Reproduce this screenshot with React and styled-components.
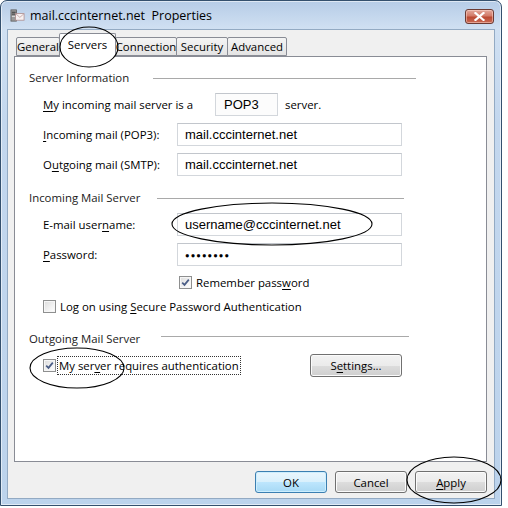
import React from "react";
import styled, { createGlobalStyle } from "styled-components";

const Global = createGlobalStyle`
  html, body { margin: 0; padding: 0; background: #ffffff; }
  body { font-family: "Open Sans", "Noto Sans", sans-serif; }
`;

const FS = "11.4px";

const Page = styled.div`
  position: relative;
  width: 508px;
  height: 508px;
  overflow: hidden;
`;

const Window = styled.div`
  box-sizing: border-box;
  width: 502px;
  height: 506px;
  border: 1px solid #34506e;
  border-radius: 7px 7px 0 0;
  background: linear-gradient(to bottom, #b6cce7 0px, #d0e0f2 28px, #c3d7ee 120px, #bcd3ec 100%);
  display: flex;
  flex-direction: column;
  box-shadow: inset 0 0 0 1px rgba(255, 255, 255, 0.55);
`;

const TitleBar = styled.div`
  height: 28px;
  display: flex;
  align-items: center;
  padding-left: 9px;
  padding-right: 7px;
  flex: none;
`;

const Title = styled.div`
  margin-left: 5px;
  font-family: "Open Sans", "Noto Sans", sans-serif;
  font-size: 12.5px;
  color: #000;
  white-space: pre;
`;

const CloseButton = styled.div`
  margin-left: auto;
  margin-top: 2px;
  width: 27px;
  height: 13px;
  border: 1px solid #6b3b34;
  border-radius: 3px;
  background: linear-gradient(to bottom, #e3a99c 0%, #d27a68 45%, #bb4a33 55%, #c96a55 100%);
  display: flex;
  align-items: center;
  justify-content: center;
  box-shadow: inset 0 0 0 1px rgba(255, 220, 210, 0.5);
`;

const Client = styled.div`
  flex: 1;
  margin: 0 6px 6px;
  border: 1px solid #93aac3;
  background: #f0f0f0;
  display: flex;
  flex-direction: column;
  padding: 3px 7px 5px 6px;
  min-height: 0;
`;

const TabRow = styled.div`
  display: flex;
  align-items: flex-end;
  height: 23px;
  padding-left: 2px;
  position: relative;
  z-index: 2;
`;

const Tab = styled.div`
  box-sizing: border-box;
  width: ${(p) => p.$w}px;
  height: ${(p) => (p.$active ? 24 : 19)}px;
  margin-right: -1px;
  margin-bottom: ${(p) => (p.$active ? -1 : 0)}px;
  border: 1px solid #898c95;
  border-bottom: ${(p) => (p.$active ? "none" : "1px solid #898c95")};
  border-radius: 2px 2px 0 0;
  background: ${(p) => (p.$active ? "#ffffff" : "linear-gradient(to bottom, #f4f4f4, #e4e4e4)")};
  font-size: ${FS};
  color: #000;
  display: flex;
  align-items: center;
  justify-content: center;
  padding-bottom: ${(p) => (p.$active ? 3 : 0)}px;
  position: relative;
  z-index: ${(p) => (p.$active ? 2 : 1)};
  white-space: nowrap;
`;

const Panel = styled.div`
  flex: 1;
  border: 1px solid #898c95;
  background: #ffffff;
  display: flex;
  flex-direction: column;
  padding-top: 12px;
`;

const GroupHeader = styled.div`
  display: flex;
  align-items: center;
  height: 16px;
  margin-top: ${(p) => p.$mt}px;
  padding-left: 14px;
  width: ${(p) => p.$end - 16}px;
  box-sizing: border-box;
`;

const GroupTitle = styled.span`
  width: ${(p) => p.$w}px;
  flex: none;
  font-size: ${FS};
  color: #1a1a1a;
  white-space: nowrap;
`;

const GroupLine = styled.div`
  flex: 1;
  height: 1px;
  background: #a9a9a9;
  margin-top: ${(p) => p.$dy || 2}px;
`;

const Row = styled.div`
  display: flex;
  align-items: center;
  height: ${(p) => p.$h || 23}px;
  margin-top: ${(p) => p.$mt}px;
  padding-left: ${(p) => p.$pl || 28}px;
  width: ${(p) => (p.$end ? p.$end - 16 : 0)}px;
  box-sizing: border-box;
`;

const Label = styled.span`
  width: ${(p) => p.$w || 134}px;
  flex: none;
  font-size: ${FS};
  color: #000;
  white-space: nowrap;
`;

const Field = styled.div`
  box-sizing: border-box;
  width: ${(p) => p.$w || 225}px;
  height: 23px;
  border: 1px solid #d3d7dc;
  border-top-color: #c2c6cc;
  background: ${(p) => (p.$readonly ? "#fcfcfc" : "#ffffff")};
  display: flex;
  align-items: center;
  padding-left: ${(p) => p.$pl || 7}px;
  font-family: "Liberation Sans", Arial, sans-serif;
  font-size: 13px;
  color: #000;
  white-space: nowrap;
`;

const Dots = styled.span`
  font-size: 7.5px;
  letter-spacing: 1.1px;
  color: #000;
  margin-top: 1px;
`;

const After = styled.span`
  margin-left: 7px;
  font-size: ${FS};
  color: #000;
`;

const CheckBox = styled.span`
  box-sizing: border-box;
  width: 13px;
  height: 13px;
  flex: none;
  border: 1px solid #8e8f8f;
  background: linear-gradient(135deg, #dcdcdc 0%, #f2f2f2 60%, #ffffff 100%);
  display: flex;
  align-items: center;
  justify-content: center;
  box-shadow: inset 0 0 0 1px #f6f6f6;
`;

const CheckText = styled.span`
  margin-left: ${(p) => p.$ml || 3}px;
  font-size: ${FS};
  color: #000;
  white-space: nowrap;
  padding: 1px 1px;
  outline: ${(p) => (p.$focus ? "1px dotted #333" : "none")};
`;

const Button = styled.div`
  box-sizing: border-box;
  width: ${(p) => p.$w || 72}px;
  height: ${(p) => p.$h || 22}px;
  margin-left: ${(p) => p.$ml || 0}px;
  border: 1px solid ${(p) => (p.$default ? "#3c7fb1" : "#707070")};
  border-radius: 3px;
  background: ${(p) =>
    p.$default
      ? "linear-gradient(to bottom, #eaf6fd 0%, #d9f0fc 50%, #bee6fd 50%, #a7d9f5 100%)"
      : "linear-gradient(to bottom, #f2f2f2 0%, #ebebeb 50%, #dddddd 50%, #cfcfcf 100%)"};
  box-shadow: inset 0 0 0 1px ${(p) => (p.$default ? "#cdeefd" : "#fbfbfb")};
  display: flex;
  align-items: center;
  justify-content: center;
  font-size: ${FS};
  color: #000;
`;

const SpacedRow = styled(Row)`
  justify-content: space-between;
`;

const CheckGroup = styled.div`
  display: flex;
  align-items: center;
`;

const ButtonBar = styled.div`
  display: flex;
  justify-content: flex-end;
  margin-top: 9px;
  height: 22px;
  flex: none;
`;

const Overlay = styled.svg`
  position: absolute;
  left: 0;
  top: 0;
  pointer-events: none;
  z-index: 10;
`;

const Check = () => (
  <svg width="9" height="9" viewBox="0 0 9 9">
    <path d="M1.2 4.6 L3.5 6.9 L7.8 1.6" fill="none" stroke="#4a5d86" strokeWidth="1.7" />
  </svg>
);

const AppIcon = () => (
  <svg width="15" height="15" viewBox="0 0 16 16">
    <rect x="1" y="2" width="6" height="12" fill="#9a9a9a" stroke="#555" strokeWidth="0.8" />
    <rect x="2" y="4" width="4" height="1" fill="#333" />
    <rect x="2" y="6" width="4" height="1" fill="#333" />
    <rect x="2" y="8.5" width="4" height="1" fill="#ddd" />
    <rect x="6" y="6" width="9" height="7" fill="#f7f1f1" stroke="#a88" strokeWidth="0.8" />
    <path d="M6 6 L10.5 10 L15 6" fill="none" stroke="#b99" strokeWidth="0.8" />
  </svg>
);

const U = styled.span`
  text-decoration: underline;
  text-underline-offset: 2px;
`;

export default function App() {
  return (
    <Page>
      <Global />
      <Window>
        <TitleBar>
          <AppIcon />
          <Title>mail.cccinternet.net  Properties</Title>
          <CloseButton>
            <svg width="11" height="9" viewBox="0 0 11 9">
              <path d="M1.5 1 L9.5 8 M9.5 1 L1.5 8" stroke="#ffffff" strokeWidth="2.2" strokeLinecap="square" />
            </svg>
          </CloseButton>
        </TitleBar>
        <Client>
          <TabRow>
            <Tab $w={44}>General</Tab>
            <Tab $w={57} $active>Servers</Tab>
            <Tab $w={62}>Connection</Tab>
            <Tab $w={52}>Security</Tab>
            <Tab $w={60}>Advanced</Tab>
          </TabRow>
          <Panel>
            <GroupHeader $mt={0} $end={417}>
              <GroupTitle $w={124}>Server Information</GroupTitle>
              <GroupLine />
            </GroupHeader>
            <Row $mt={8} $end={480}>
              <Label $w={172}>
                <U>M</U>y incoming mail server is a
              </Label>
              <Field $w={63} $pl={8} $readonly>POP3</Field>
              <After>server.</After>
            </Row>
            <Row $mt={7} $end={480}>
              <Label>
                <U>I</U>ncoming mail (POP3):
              </Label>
              <Field>mail.cccinternet.net</Field>
            </Row>
            <Row $mt={7} $end={480}>
              <Label>
                O<U>u</U>tgoing mail (SMTP):
              </Label>
              <Field>mail.cccinternet.net</Field>
            </Row>

            <GroupHeader $mt={13} $end={405}>
              <GroupTitle $w={128}>Incoming Mail Server</GroupTitle>
              <GroupLine $dy={0} />
            </GroupHeader>
            <Row $mt={8} $end={480}>
              <Label>
                E-mail user<U>n</U>ame:
              </Label>
              <Field>username@cccinternet.net</Field>
            </Row>
            <Row $mt={7} $end={480}>
              <Label>
                <U>P</U>assword:
              </Label>
              <Field>
                <Dots>●●●●●●●●</Dots>
              </Field>
            </Row>
            <Row $mt={8} $h={16} $pl={164} $end={480}>
              <CheckBox>
                <Check />
              </CheckBox>
              <CheckText>
                Remember pass<U>w</U>ord
              </CheckText>
            </Row>
            <Row $mt={8} $h={16} $end={480}>
              <CheckBox />
              <CheckText>
                Log on using <U>S</U>ecure Password Authentication
              </CheckText>
            </Row>

            <GroupHeader $mt={16} $end={410}>
              <GroupTitle $w={132}>Outgoing Mail Server</GroupTitle>
              <GroupLine $dy={-3} />
            </GroupHeader>
            <SpacedRow $mt={8} $end={403}>
              <CheckGroup>
                <CheckBox>
                  <Check />
                </CheckBox>
                <CheckText $ml={2} $focus>
                  My ser<U>v</U>er requires authentication
                </CheckText>
              </CheckGroup>
              <Button $w={92} $h={23}>
                S<U>e</U>ttings...
              </Button>
            </SpacedRow>
          </Panel>
          <ButtonBar>
            <Button $default>OK</Button>
            <Button $ml={8}>Cancel</Button>
            <Button $ml={8} $w={72}>
              <U>A</U>pply
            </Button>
          </ButtonBar>
        </Client>
      </Window>
      <Overlay width="508" height="508" viewBox="0 0 508 508">
        <g fill="none" stroke="#000" strokeWidth="1.1">
          <ellipse cx="89" cy="47" rx="29" ry="20" />
          <ellipse cx="272" cy="224" rx="100" ry="21" />
          <ellipse cx="77" cy="368" rx="47" ry="20" />
          <ellipse cx="454" cy="480" rx="47" ry="23" />
        </g>
      </Overlay>
    </Page>
  );
}
